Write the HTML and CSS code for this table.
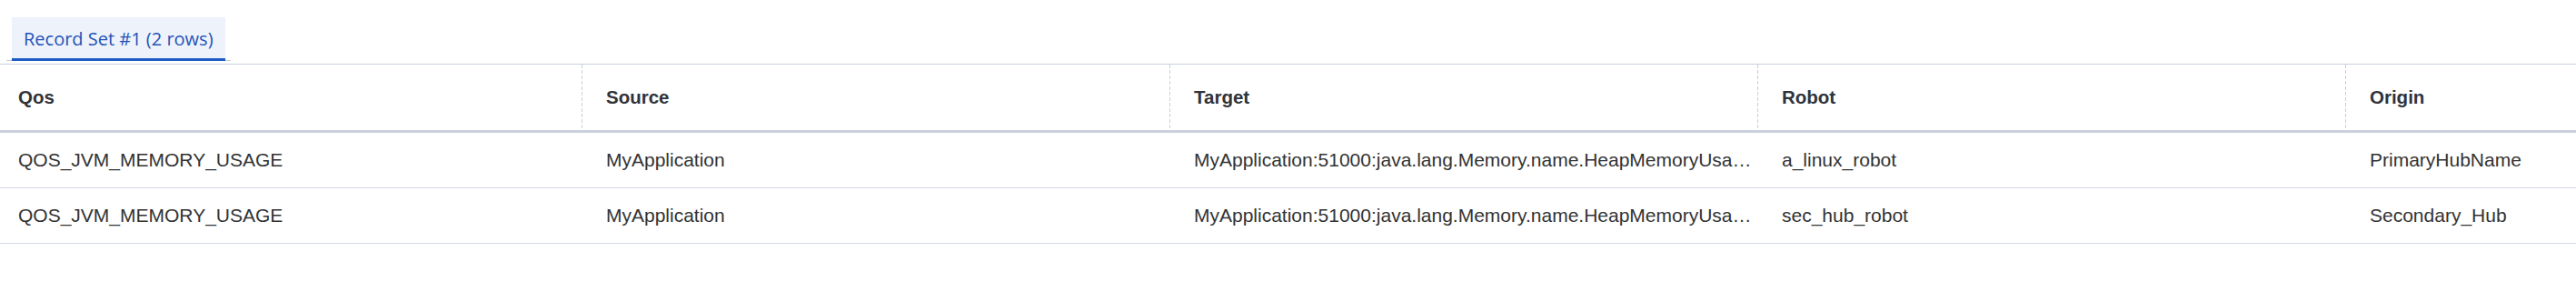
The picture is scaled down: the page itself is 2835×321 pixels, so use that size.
FILE: index.html
```html
<!DOCTYPE html>
<html>
<head>
<meta charset="utf-8">
<link rel="stylesheet" href="styles.css">
</head>
<body>
<div class="page">
  <div class="tablist">
    <div class="tab">Record Set #1 (2 rows)</div>
  </div>
  <div class="grid-wrap">
    <table class="grid">
      <colgroup>
        <col class="c"><col class="c"><col class="c"><col class="c"><col class="c">
      </colgroup>
      <thead>
        <tr>
          <th>Qos</th>
          <th>Source</th>
          <th>Target</th>
          <th>Robot</th>
          <th>Origin</th>
        </tr>
      </thead>
      <tbody>
        <tr>
          <td>QOS_JVM_MEMORY_USAGE</td>
          <td>MyApplication</td>
          <td>MyApplication:51000:java.lang.Memory.name.HeapMemoryUsa…</td>
          <td>a_linux_robot</td>
          <td>PrimaryHubName</td>
        </tr>
        <tr>
          <td>QOS_JVM_MEMORY_USAGE</td>
          <td>MyApplication</td>
          <td>MyApplication:51000:java.lang.Memory.name.HeapMemoryUsa…</td>
          <td>sec_hub_robot</td>
          <td>Secondary_Hub</td>
        </tr>
      </tbody>
    </table>
  </div>
</div>
</body>
</html>
```

FILE: styles.css
```css
html, body {
  margin: 0;
  padding: 0;
  background: #ffffff;
}

.page {
  padding-top: 19px;
  width: 2835px;
  overflow: hidden;
}

.tablist {
  display: inline-flex;
  margin-left: 7px;
  padding: 0 6px;
  border-bottom: 1px solid #c9cfd9;
  height: 47px;
}

.tab {
  box-sizing: border-box;
  height: 48px;
  margin-bottom: -1px;
  padding: 2px 13px 0 13px;
  display: flex;
  align-items: center;
  background: #eef3fb;
  border-bottom: 3px solid #1f5bc6;
  color: #2452b8;
  font-family: "Open Sans", "Noto Sans", sans-serif;
  font-size: 20px;
}

.grid-wrap {
  margin-top: 3px;
  width: 2835px;
  overflow: hidden;
}

.grid {
  table-layout: fixed;
  width: 3235px;
  border-collapse: separate;
  border-spacing: 0;
  border-top: 1px solid #c9d0dc;
  font-family: "Liberation Sans", Arial, sans-serif;
  color: #333333;
}

.grid col.c {
  width: 647px;
}

.grid th {
  position: relative;
  box-sizing: border-box;
  height: 75px;
  padding: 0 20px;
  text-align: left;
  font-weight: bold;
  font-size: 20.5px;
  color: #303339;
  border-bottom: 3px solid #c9d0dc;
  white-space: nowrap;
  overflow: hidden;
}

.grid th::after {
  content: "";
  position: absolute;
  top: 0;
  bottom: 0;
  right: 6px;
  width: 1px;
  background: repeating-linear-gradient(to bottom, #c9ced8 0, #c9ced8 4px, transparent 4px, transparent 6px);
}

.grid td {
  box-sizing: border-box;
  height: 61px;
  padding: 0 4px 0 20px;
  font-size: 21px;
  color: #333333;
  border-bottom: 1px solid #d3d9e3;
  white-space: nowrap;
  overflow: hidden;
}
```
